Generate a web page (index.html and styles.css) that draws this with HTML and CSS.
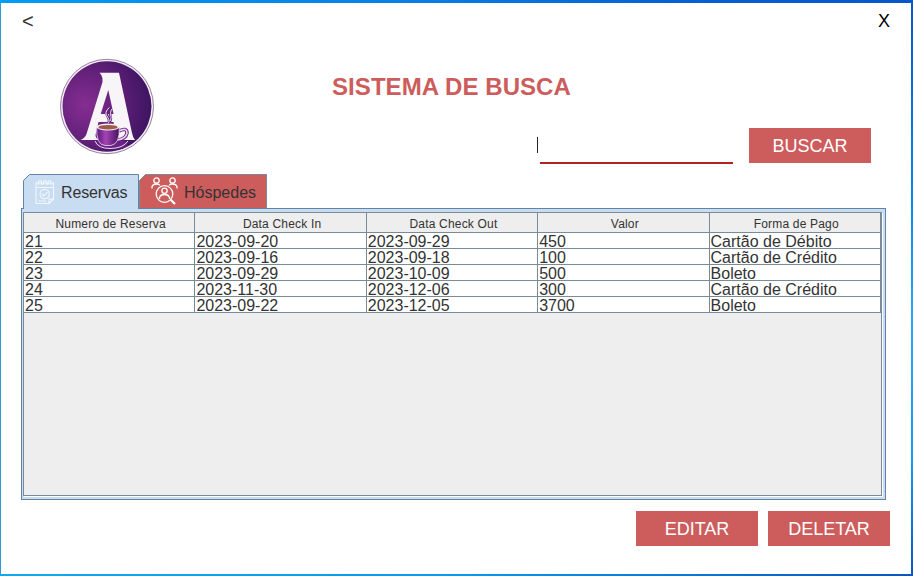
FILE: index.html
```html
<!DOCTYPE html>
<html lang="pt">
<head>
<meta charset="utf-8">
<title>Sistema de Busca</title>
<link rel="stylesheet" href="styles.css">
</head>
<body>
<main class="window">
  <header class="titlebar"><span class="back">&lt;</span><span class="close">X</span></header>
  <section class="top">
    <svg class="logo" viewBox="0 0 96 98">
      <defs>
        <radialGradient id="disc" cx=".25" cy=".48" r=".75"><stop offset="0" stop-color="#862d92"/><stop offset=".5" stop-color="#63217a"/><stop offset="1" stop-color="#3d1462"/></radialGradient>
        <linearGradient id="cup"><stop offset="0" stop-color="#5b1878"/><stop offset=".4" stop-color="#a344b4"/><stop offset="1" stop-color="#45105f"/></linearGradient>
      </defs>
      <ellipse cx="47" cy="48.500" rx="46.500" ry="47.200" fill="#f3edf5" stroke="#8c7496" stroke-width=".9"/>
      <ellipse cx="47" cy="48.500" rx="44.500" ry="45.200" fill="url(#disc)"/>
      <path d="M39.500 14.700H59L72 75Q73 80 75 82H56L53.500 64H38.500L35.500 77Q35.500 81 40 82H20.500Q25 80 26.500 76L42.500 24Q43 18 39.500 14.700ZM48.300 32L40.700 56H53.500Z" fill="#f8f5f9" fill-rule="evenodd"/>
      <ellipse cx="51" cy="86" rx="16.500" ry="4.800" fill="#6c2184"/>
      <path d="M35 83Q38 90.500 50 90.500Q63 90.500 68 83" fill="none" stroke="#e7d9ec" stroke-width="1"/>
      <path d="M59 73Q67 69 67 75Q66 81 57 82" fill="none" stroke="#6c2184" stroke-width="3.500"/>
      <path d="M59 73Q67 69 67 75Q66 81 57 82" fill="none" stroke="#e4d2e9" stroke-width="1.600"/>
      <path d="M36.700 69Q36 87 45 87.500H51Q60 86 59.300 69Z" fill="url(#cup)" stroke="#eadcf0" stroke-width=".8"/>
      <ellipse cx="48" cy="69" rx="11.600" ry="3.500" fill="#f6eef5"/>
      <ellipse cx="48" cy="69.200" rx="9.600" ry="2.300" fill="#9b5b48"/>
      <path d="M48.500 65C52 60 44 58 47 53Q48 51 50 49.500C47 55 54 58 49.500 64" fill="none" stroke="#63217a" stroke-width="2.600"/>
      <path d="M48.500 65C51 60 44 58 46.500 53Q47.500 51 49.500 49.500M50 63C53 58 48.500 56 52 51" fill="none" stroke="#f4e9f5" stroke-width="1"/>
    </svg>
    <h1>SISTEMA DE BUSCA</h1>
    <div class="search">
      <div class="field"><span class="caret"></span></div>
      <button>BUSCAR</button>
    </div>
  </section>
  <nav class="tabs">
    <div class="tab selected">
      <svg class="edge" viewBox="0 0 116 35"><path d="M.5 35V6.500L6.500.5H115.500V35" fill="#c8ddf2" stroke="#6382a4"/></svg>
      <svg class="calendar" viewBox="0 0 20 26" fill="none" stroke="#f3f8fc" stroke-width="1.100">
        <path d="M1 4V24.500H14L18.500 20V4ZM1 8.500H18.500M14 24.500V20H18.500M3.500 22H11"/>
        <path d="M3.500 6V3a1.500 1.500 0 0 1 3 0V6M8.300 6V3a1.500 1.500 0 0 1 3 0V6M13 6V3a1.500 1.500 0 0 1 3 0V6"/>
        <circle cx="9.700" cy="15" r="4.700"/><path d="M7 15L9 17L12.500 13"/>
      </svg>
      <span>Reservas</span>
    </div>
    <div class="tab guests">
      <svg class="edge" viewBox="0 0 128 35"><path d="M.5 35V6.500L6.500.5H127.500V35" fill="#cd5c5c" stroke="#7a8a99"/></svg>
      <svg class="people" viewBox="0 0 27 28" fill="none" stroke="#fff" stroke-width="1.300">
        <circle cx="5.500" cy="3.500" r="2.700"/><circle cx="21.500" cy="3.500" r="2.700"/>
        <path d="M1 11.500V9.500Q2 7 5.500 7Q8 7 9 8.500M18 8.500Q19 7 21.500 7Q25 7 26 9.500V11.500"/>
        <circle cx="13.500" cy="17" r="8.300"/><circle cx="13.500" cy="13.700" r="2.600"/>
        <path d="M8.500 22V20.500Q9.500 17.500 13.500 17.500Q17.500 17.500 18.500 20.500V22"/>
        <path d="M19.500 22.500L24 27" stroke-width="2.200"/>
      </svg>
      <span>Hóspedes</span>
    </div>
  </nav>
  <section class="panel">
    <div class="viewport">
      <table>
        <thead><tr><th>Numero de Reserva</th><th>Data Check In</th><th>Data Check Out</th><th>Valor</th><th>Forma de Pago</th></tr></thead>
        <tbody>
          <tr><td>21</td><td>2023-09-20</td><td>2023-09-29</td><td>450</td><td>Cartão de Débito</td></tr>
          <tr><td>22</td><td>2023-09-16</td><td>2023-09-18</td><td>100</td><td>Cartão de Crédito</td></tr>
          <tr><td>23</td><td>2023-09-29</td><td>2023-10-09</td><td>500</td><td>Boleto</td></tr>
          <tr><td>24</td><td>2023-11-30</td><td>2023-12-06</td><td>300</td><td>Cartão de Crédito</td></tr>
          <tr><td>25</td><td>2023-09-22</td><td>2023-12-05</td><td>3700</td><td>Boleto</td></tr>
        </tbody>
      </table>
    </div>
  </section>
  <footer class="actions"><button>EDITAR</button><button>DELETAR</button></footer>
</main>
</body>
</html>
```
FILE: styles.css
```css
* { box-sizing: border-box; }
body {
  margin: 0;
  width: 913px;
  height: 576px;
  padding: 3px 2px 2px 1px;
  overflow: hidden;
  font-family: "Liberation Sans", Arial, sans-serif;
  color: #333;
  background:
    linear-gradient(90deg, #009cf5, #0a7ee6 45%, #0560d2 75%, #0756cc) top / 100% 3px no-repeat,
    linear-gradient(90deg, #0fa9ef, #0a9aec 50%, #0a55c2) bottom / 100% 2px no-repeat,
    linear-gradient(#0756cc, #078be8 35%, #2aa5f5 55%, #159cf0 80%, #0a55c2) right / 2px 100% no-repeat,
    #2b9bdc;
}
.window { height: 571px; background: #fff; display: flex; flex-direction: column; }
.titlebar {
  height: 37px;
  flex: none;
  display: flex;
  justify-content: space-between;
  padding: 0 21px 0 21px;
  font-size: 18px;
  line-height: 37px;
}
.back { font-size: 20px; }
.close { color: #000; }
.top {
  height: 134px;
  flex: none;
  display: grid;
  grid-template-columns: 96px 176px 207px 1fr;
  grid-template-rows: 88px 46px;
  padding-left: 59px;
}
.logo { grid-column: 1; grid-row: 1 / 3; width: 96px; height: 98px; margin-top: 18px; }
h1 {
  grid-column: 3 / 5;
  grid-row: 1;
  margin: 33px 0 0;
  font-size: 24px;
  line-height: 28px;
  letter-spacing: .07px;
  color: #cd5c5c;
}
.search { grid-column: 3 / 5; grid-row: 2; display: flex; padding-left: 205px; }
.field { width: 196px; height: 36px; margin-right: 16px; display: flex; background: linear-gradient(#b22222, #b22222) right bottom / 193px 2px no-repeat; }
.caret { width: 1px; height: 16px; margin-top: 9px; background: #222; }
button {
  width: 122px;
  height: 35px;
  padding: 1px 0 0;
  border: 0;
  background: #cd5c5c;
  color: #fff;
  font: 18px "Liberation Sans", Arial, sans-serif;
}
.tabs { height: 34px; flex: none; display: flex; padding-left: 22px; }
.tab { position: relative; z-index: 1; display: flex; align-items: center; height: 35px; font-size: 16px; }
.tab span, .calendar, .people { position: relative; }
.tab span { padding-top: 2px; letter-spacing: -.15px; }
.selected { width: 116px; padding-left: 12px; }
.guests { width: 128px; height: 34px; padding-left: 12px; overflow: hidden; }
.guests span { padding-top: 3px; letter-spacing: 0; }
.edge { position: absolute; top: 0; left: 0; width: 100%; height: 35px; }
.calendar { width: 20px; height: 26px; margin-right: 6px; }
.people { width: 27px; height: 28px; margin-right: 6px; }
.panel {
  width: 865px;
  height: 292px;
  flex: none;
  margin-left: 20px;
  padding: 3px 3px 3px 1px;
  border: 1px solid #6382a4;
  background: #c8ddf2;
}
.viewport { height: 284px; border: 1px solid #7a8a99; background: #eee; box-shadow: 1px 1px #fff; }
table { width: 857px; border-collapse: separate; border-spacing: 0; table-layout: fixed; }
th, td { padding: 0; border-right: 1px solid #7a8a99; border-bottom: 1px solid #7a8a99; white-space: nowrap; }
th { height: 20px; padding: 3px 0 0 3px; font-size: 12px; font-weight: 400; letter-spacing: .18px; line-height: 16px; background: #eee; }
td { height: 16px; padding: 3px 0 0 1px; font-size: 16px; line-height: 12px; text-align: left; background: #fff; }
.actions { display: flex; justify-content: flex-end; gap: 10px; padding: 11px 21px 0 0; }
```
